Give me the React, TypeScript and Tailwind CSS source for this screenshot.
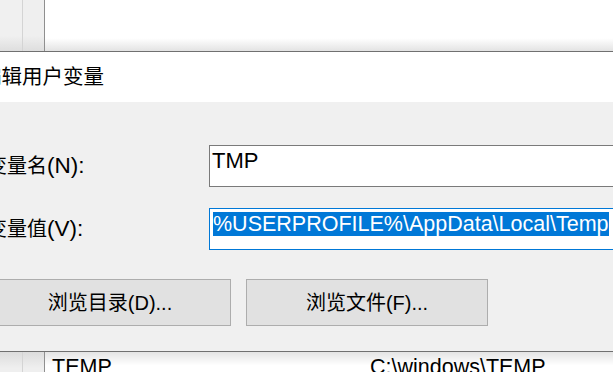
export default function App() {
  const font = "font-['Liberation_Sans','Noto_Sans_CJK_SC',sans-serif]";
  return (
    <div className={`w-[613px] h-[372px] overflow-hidden flex flex-col bg-white text-black ${font}`}>
      {/* background window, top part */}
      <div className="h-[51px] flex shrink-0">
        <div className="w-[22px] bg-[linear-gradient(to_bottom,#f0f0f0_70%,#dedede)]" />
        <div className="w-px bg-[#d4d4d4]" />
        <div className="w-[21px] bg-[linear-gradient(to_bottom,#efefef_70%,#dedede)]" />
        <div className="w-px bg-[#8f8f8f]" />
        <div className="flex-1 bg-[linear-gradient(to_bottom,#ffffff_75%,#e3e3e3)]" />
      </div>

      {/* dialog */}
      <div className="shrink-0 border-y border-[#707070] flex flex-col">
        <div className="h-[50px] bg-white flex items-center">
          <span className="-ml-[19px] text-[20.5px] leading-[24px] whitespace-nowrap">编辑用户变量</span>
        </div>
        <div className="bg-[#f0f0f0] h-[249px] flex flex-col pt-[43px]">
          <div className="flex items-center h-[42px]">
            <div className="-ml-[13px] w-[222px] shrink-0 text-[20px] leading-[24px] whitespace-nowrap">
              变量名<span className="text-[22.5px]">(N):</span>
            </div>
            <div className="w-[520px] h-[42px] shrink-0 bg-white border border-[#7a7a7a] pl-[2px] pt-[1px] text-[22px] leading-[27px] whitespace-nowrap">
              TMP
            </div>
          </div>
          <div className="flex items-center h-[42px] mt-[21px]">
            <div className="-ml-[13px] w-[222px] shrink-0 text-[20px] leading-[24px] whitespace-nowrap">
              变量值<span className="text-[22.5px]">(V):</span>
            </div>
            <div className="w-[520px] h-[42px] shrink-0 bg-white border border-[#0078d7] pl-[3px] pt-[2px] text-[21.5px] leading-[27px] whitespace-nowrap">
              <span className="bg-[#0078d7] text-white">%USERPROFILE%\AppData\Local\Temp</span>
            </div>
          </div>
          <div className="flex mt-[29px] gap-[15px]">
            <button className="-ml-[11px] w-[242px] h-[47px] shrink-0 bg-[#e1e1e1] border border-[#adadad] text-[20px] leading-[24px] whitespace-nowrap">
              浏览目录(D)...
            </button>
            <button className="w-[242px] h-[47px] shrink-0 bg-[#e1e1e1] border border-[#adadad] text-[20px] leading-[24px] whitespace-nowrap">
              浏览文件(F)...
            </button>
          </div>
        </div>
      </div>

      {/* background window, bottom part */}
      <div className="flex-1 flex">
        <div className="w-[22px] bg-[linear-gradient(to_bottom,#dcdcdc,#efefef_60%)]" />
        <div className="w-px bg-[#d4d4d4]" />
        <div className="w-[21px] bg-[linear-gradient(to_bottom,#dcdcdc,#efefef_60%)]" />
        <div className="w-px bg-[#8f8f8f]" />
        <div className="flex-1 flex pt-[3px] pl-[7px] bg-[linear-gradient(to_bottom,#e4e4e4,#ffffff_50%)] text-[21.5px] leading-[24px] whitespace-nowrap">
          <span className="w-[318px]">TEMP</span>
          <span>C:\windows\TEMP</span>
        </div>
      </div>
    </div>
  );
}
